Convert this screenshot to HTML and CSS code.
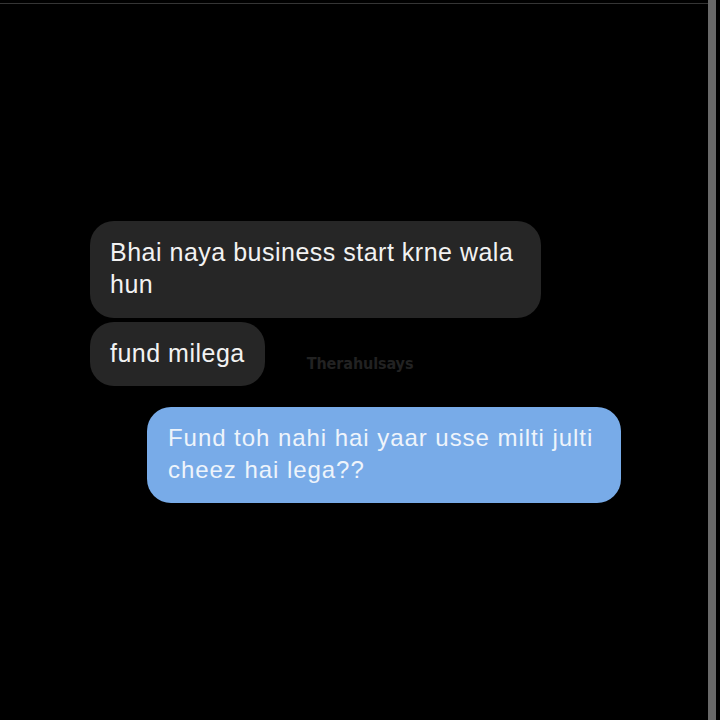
FILE: index.html
```html
<!DOCTYPE html>
<html>
<head>
<meta charset="utf-8">
<link rel="stylesheet" href="styles.css">
</head>
<body>
<div class="page">
  <main class="chat">
    <div class="msg in first">Bhai naya business start krne wala hun</div>
    <div class="row">
      <div class="msg in second">fund milega</div>
      <span class="mark">Therahulsays</span>
    </div>
    <div class="msg out">Fund toh nahi hai yaar usse milti julti cheez hai lega??</div>
  </main>
  <div class="bar"></div>
</div>
</body>
</html>
```
FILE: styles.css
```css
html, body {
  margin: 0;
  padding: 0;
  background: #000;
}
.page {
  display: flex;
  width: 720px;
  height: 720px;
  overflow: hidden;
}
.chat {
  width: 708px;
  margin-top: 3px;
  border-top: 1px solid #353535;
  padding-top: 217px;
  box-sizing: border-box;
  display: flex;
  flex-direction: column;
  font-family: "Liberation Sans", Arial, sans-serif;
}
.bar {
  width: 8px;
  height: 720px;
  background: #696969;
}
.msg {
  box-sizing: border-box;
  border-radius: 24px;
}
.in {
  background: #262626;
  color: #f2f2f2;
  font-size: 25px;
  line-height: 32px;
  letter-spacing: 0.5px;
  margin-left: 90px;
}
.first {
  width: 451px;
  height: 97px;
  padding: 15px 20px 18px 20px;
}
.row {
  display: flex;
  align-items: center;
  margin-top: 4px;
}
.second {
  height: 64px;
  padding: 15px 20px 17px 20px;
}
.mark {
  margin-left: 42px;
  margin-top: 18px;
  font-family: "DejaVu Sans Condensed", "DejaVu Sans", sans-serif;
  font-weight: bold;
  font-size: 16px;
  color: #222222;
  letter-spacing: -0.1px;
}
.out {
  align-self: flex-start;
  margin-left: 147px;
  margin-top: 21px;
  width: 474px;
  height: 96px;
  padding: 15px 21px 17px 21px;
  background: #78abe8;
  color: #eef4fb;
  font-size: 24px;
  line-height: 32px;
  letter-spacing: 0.95px;
}
```
